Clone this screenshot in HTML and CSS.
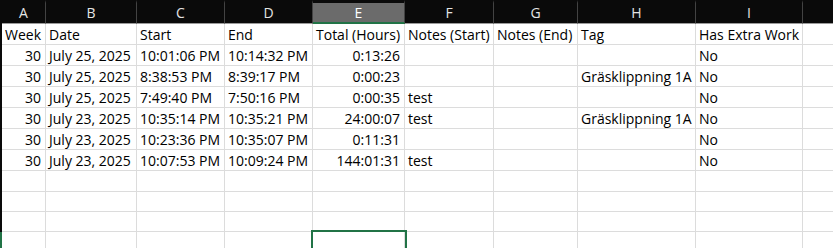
FILE: index.html
```html
<!DOCTYPE html>
<html lang="en">
<head>
  <meta charset="UTF-8">
  <meta name="viewport" content="width=device-width, initial-scale=1.0">
  <title>Work Log</title>
  <link rel="stylesheet" href="styles.css">
</head>
<body>
  <div class="sheet" id="sheet"></div>

  <script>
    const sheet = document.getElementById('sheet');
    const letters = ['A', 'B', 'C', 'D', 'E', 'F', 'G', 'H', 'I', ''];
    const numeric = [true, false, false, false, true, false, false, false, false, false];

    const rows = [
      ['Week', 'Date', 'Start', 'End', 'Total (Hours)', 'Notes (Start)', 'Notes (End)', 'Tag', 'Has Extra Work', ''],
      ['30', 'July 25, 2025', '10:01:06 PM', '10:14:32 PM', '0:13:26', '', '', '', 'No', ''],
      ['30', 'July 25, 2025', '8:38:53 PM', '8:39:17 PM', '0:00:23', '', '', 'Gräsklippning 1A', 'No', ''],
      ['30', 'July 25, 2025', '7:49:40 PM', '7:50:16 PM', '0:00:35', 'test', '', '', 'No', ''],
      ['30', 'July 23, 2025', '10:35:14 PM', '10:35:21 PM', '24:00:07', 'test', '', 'Gräsklippning 1A', 'No', ''],
      ['30', 'July 23, 2025', '10:23:36 PM', '10:35:07 PM', '0:11:31', '', '', '', 'No', ''],
      ['30', 'July 23, 2025', '10:07:53 PM', '10:09:24 PM', '144:01:31', 'test', '', '', 'No', ''],
      [], [], [], []
    ];
    const selectedRow = rows.length - 1;
    const selectedCol = 4;

    function addCell(cls, text) {
      const cell = document.createElement('div');
      cell.className = cls;
      cell.textContent = text || '';
      sheet.appendChild(cell);
    }

    function renderHeader() {
      addCell('corner');
      letters.forEach((letter, col) => {
        let cls = 'col-head';
        if (col === selectedCol) cls += ' active';
        if (col === letters.length - 1) cls += ' last';
        addCell(cls, letter);
      });
    }

    function renderRows() {
      rows.forEach((row, r) => {
        addCell(r === selectedRow ? 'row-head active' : 'row-head');
        letters.forEach((_, col) => {
          const value = row[col] || '';
          let cls = 'cell';
          if (r > 0 && numeric[col]) cls += ' num';
          if (col === letters.length - 1) cls += ' last';
          if (r === selectedRow && col === selectedCol) cls += ' selected';
          addCell(cls, value);
        });
      });
    }

    renderHeader();
    renderRows();
  </script>
</body>
</html>
```

FILE: styles.css
```css
body {
  font-family: "Open Sans", "Liberation Sans", sans-serif;
  background-color: #fff;
  margin: 0;
  padding: 0;
  overflow: hidden;
}

.sheet {
  display: grid;
  grid-template-columns: 2px 44px 91px 88px 88px 92px 89px 84px 118px 107px 1fr;
  grid-template-rows: 24px repeat(8, 21px) 20px 20px 40px;
  width: 833px;
  height: 248px;
  overflow: hidden;
}

.corner {
  background-color: #0a0a0a;
}

.col-head {
  box-sizing: border-box;
  display: flex;
  align-items: center;
  justify-content: center;
  background-color: #0a0a0a;
  border-top: 3px solid #0a0a0a;
  border-right: 1px solid #434343;
  border-bottom: 1px solid #9b9b9b;
  color: #e4e4e4;
  font-size: 14px;
  line-height: 18px;
}

.col-head.active {
  background-color: #6b6b6b;
  border-bottom: 2px solid #217346;
  color: #fff;
}

.col-head.last {
  border-right: none;
}

.row-head {
  background-color: #0a0a0a;
}

.row-head.active {
  background-color: #217346;
}

.cell {
  box-sizing: border-box;
  display: flex;
  align-items: flex-end;
  padding: 0 3px;
  border-right: 1px solid #dcdcdc;
  border-bottom: 1px solid #dcdcdc;
  color: #000;
  font-size: 14px;
  line-height: 18px;
  white-space: nowrap;
  overflow: hidden;
}

.cell.num {
  justify-content: flex-end;
  padding-right: 4px;
}

.cell.last {
  border-right: none;
}

.cell.selected {
  overflow: visible;
  outline: 2px solid #217346;
  outline-offset: 0;
}
```
